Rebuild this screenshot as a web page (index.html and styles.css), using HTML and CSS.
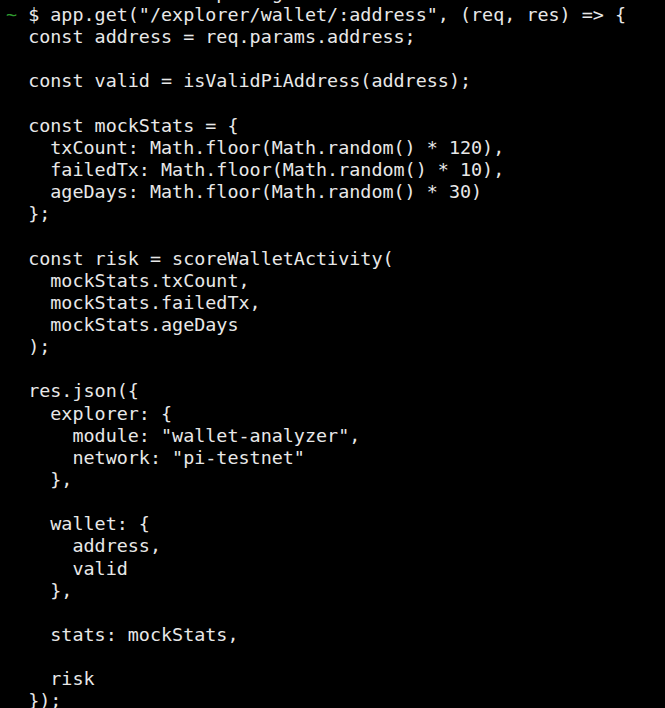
FILE: index.html
```html
<!DOCTYPE html>
<html lang="en">
<head>
<meta charset="utf-8">
<title>Terminal</title>
<link rel="stylesheet" href="styles.css">
</head>
<body>
<main class="terminal">
<pre class="screen"><span class="cut">                   p    g</span>
<span class="prompt">~</span> $ app.get("/explorer/wallet/:address", (req, res) => {
  const address = req.params.address;

  const valid = isValidPiAddress(address);

  const mockStats = {
    txCount: Math.floor(Math.random() * 120),
    failedTx: Math.floor(Math.random() * 10),
    ageDays: Math.floor(Math.random() * 30)
  };

  const risk = scoreWalletActivity(
    mockStats.txCount,
    mockStats.failedTx,
    mockStats.ageDays
  );

  res.json({
    explorer: {
      module: "wallet-analyzer",
      network: "pi-testnet"
    },

    wallet: {
      address,
      valid
    },

    stats: mockStats,

    risk
  });
</pre>
</main>
</body>
</html>
```

FILE: styles.css
```css
html, body {
  margin: 0;
  padding: 0;
  background: #000;
}

body {
  overflow: hidden;
  height: 708px;
}

.terminal {
  padding: 4px 0 0 6px;
}

.screen {
  margin: -22.14px 0 0 0;
  font-family: "DejaVu Sans Mono", "Liberation Mono", monospace;
  font-size: 18.4px;
  line-height: 22.14px;
  color: #e8e8e8;
  white-space: pre;
}

.cut {
  color: #e8e8e8;
}

.prompt {
  color: #2f9a2f;
}
```
